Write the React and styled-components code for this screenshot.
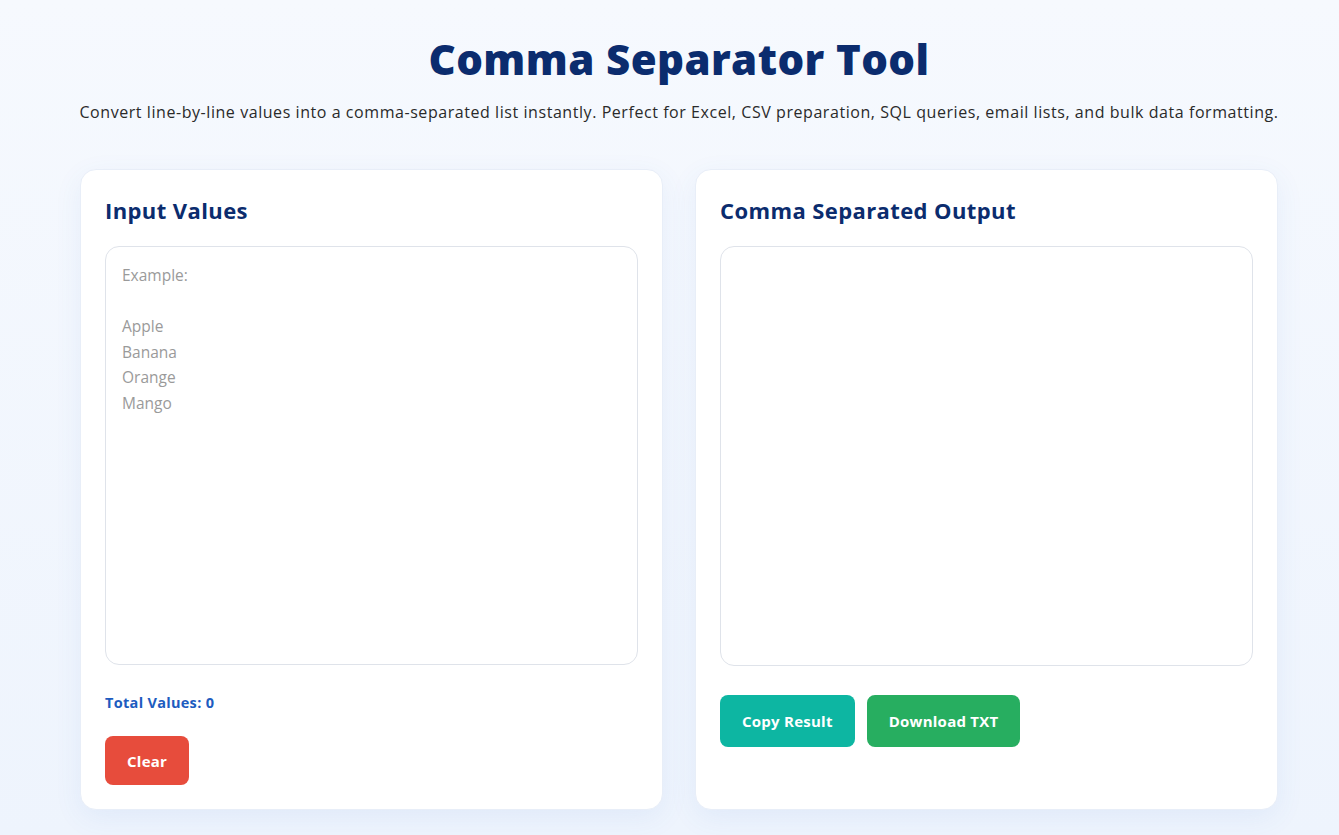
import React, { useState } from "react";
import styled, { createGlobalStyle } from "styled-components";

const Global = createGlobalStyle`
  * { box-sizing: border-box; }
  html, body { margin: 0; padding: 0; }
  body {
    font-family: "Open Sans", "Noto Sans", sans-serif;
    background: linear-gradient(180deg, #f6f9fe 0%, #eef4fd 100%);
    min-height: 100vh;
    color: #222;
  }
`;

const Page = styled.div`
  padding: 0 61px 0 80px;
  min-height: 835px;
`;

const Header = styled.header`
  text-align: center;
  padding-top: 31px;
  margin: 0 -40px;
`;

const Title = styled.h1`
  margin: 0;
  font-size: 42px;
  line-height: 56px;
  font-weight: 800;
  color: #0b2c6e;
  letter-spacing: 0.4px;
`;

const Subtitle = styled.p`
  margin: 13px 0 0;
  font-size: 16px;
  line-height: 24px;
  letter-spacing: 0.56px;
  white-space: nowrap;
  color: #2a2a2a;
`;

const Grid = styled.div`
  margin-top: 45px;
  display: grid;
  grid-template-columns: 1fr 1fr;
  gap: 32px;
`;

const Card = styled.section`
  background: #fff;
  border-radius: 16px;
  border: 1px solid #e8eef8;
  box-shadow: 0 8px 28px rgba(60, 110, 200, 0.08);
  padding: 24px;
  display: flex;
  flex-direction: column;
  height: 641px;
`;

const CardTitle = styled.h2`
  margin: 1px 0 0;
  font-size: 22px;
  line-height: 30px;
  font-weight: 700;
  letter-spacing: 0.4px;
  color: #0b2c6e;
`;

const Area = styled.textarea`
  margin-top: 21px;
  width: 100%;
  height: 420px;
  resize: none;
  border: 1px solid #dfe3ea;
  border-radius: 14px;
  padding: 16px;
  font-family: inherit;
  font-size: 15.5px;
  line-height: 25.6px;
  color: #333;
  background: #fff;
  outline: none;
  &::placeholder { color: #9a9a9a; }
`;

const Count = styled.div`
  margin-top: 28px;
  font-size: 14.5px;
  line-height: 20px;
  font-weight: 700;
  letter-spacing: 0.3px;
  color: #1d5cc0;
`;

const Row = styled.div`
  display: flex;
  gap: 12px;
  margin-top: ${(p) => p.$top}px;
`;

const Button = styled.button`
  border: none;
  border-radius: 8px;
  color: #fff;
  font-family: inherit;
  font-size: 15px;
  font-weight: 700;
  letter-spacing: 0.25px;
  height: ${(p) => p.$h}px;
  padding: 0 ${(p) => p.$px}px;
  background: ${(p) => p.$bg};
  cursor: pointer;
`;

export default function App() {
  const [input, setInput] = useState("");
  const values = input.split("\n").map((s) => s.trim()).filter(Boolean);
  const output = values.join(", ");
  return (
    <>
      <Global />
      <Page>
        <Header>
          <Title>Comma Separator Tool</Title>
          <Subtitle>
            Convert line-by-line values into a comma-separated list instantly. Perfect for Excel, CSV
            preparation, SQL queries, email lists, and bulk data formatting.
          </Subtitle>
        </Header>
        <Grid>
          <Card>
            <CardTitle>Input Values</CardTitle>
            <Area
              value={input}
              onChange={(e) => setInput(e.target.value)}
              placeholder={"Example:\n\nApple\nBanana\nOrange\nMango"}
            />
            <Count>Total Values: {values.length}</Count>
            <Row $top={23}>
              <Button $bg="#e74c3c" $h={49} $px={22} onClick={() => setInput("")}>
                Clear
              </Button>
            </Row>
          </Card>
          <Card>
            <CardTitle>Comma Separated Output</CardTitle>
            <Area value={output} readOnly />
            <Row $top={29}>
              <Button $bg="#0db6a2" $h={52} $px={22}>Copy Result</Button>
              <Button $bg="#27ae60" $h={52} $px={22}>Download TXT</Button>
            </Row>
          </Card>
        </Grid>
      </Page>
    </>
  );
}
